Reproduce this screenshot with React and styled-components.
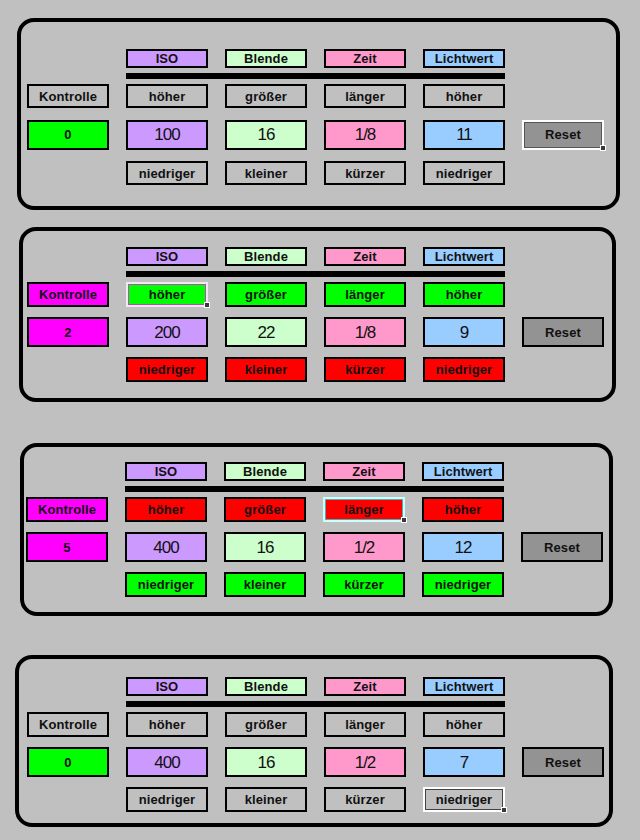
import React from "react";
import styled, { createGlobalStyle } from "styled-components";

const Global = createGlobalStyle`
  html, body { margin: 0; padding: 0; background: #c0c0c0; }
  body { font-family: "Liberation Sans", Arial, sans-serif; color: #111; }
`;

const Page = styled.div`
  width: 640px;
  min-height: 840px;
  padding-top: 18px;
  box-sizing: border-box;
  display: flex;
  flex-direction: column;
  align-items: flex-start;
`;

const Panel = styled.section`
  box-sizing: border-box;
  margin-top: ${(p) => p.$gapTop}px;
  margin-left: ${(p) => p.$left}px;
  width: ${(p) => p.$width}px;
  height: ${(p) => p.$height}px;
  padding-top: ${(p) => p.$padTop}px;
  padding-left: ${(p) => p.$padLeft}px;
  border: 4px solid #000;
  border-radius: 17px;
  display: grid;
  grid-template-columns: repeat(6, 82px);
  grid-template-rows: 19px 6px ${(p) => p.$rowH}px ${(p) => p.$valTrack}px ${(p) => p.$rowH}px;
  column-gap: 17px;
  row-gap: 5px;
  align-content: start;
`;

const Bar = styled.div`
  grid-column: 2 / 6;
  grid-row: 2;
  background: #000;
`;

const Box = styled.div`
  position: relative;
  box-sizing: border-box;
  grid-column: ${(p) => p.$col};
  grid-row: ${(p) => p.$row};
  align-self: ${(p) => (p.$h ? "center" : "stretch")};
  height: ${(p) => (p.$h ? `${p.$h}px` : "auto")};
  background: ${(p) => p.$bg};
  border: 2px solid ${(p) => (p.$sel ? p.$sel.outer : "#000")};
  box-shadow: ${(p) => (p.$sel ? `inset 0 0 0 1px ${p.$sel.inner}` : "none")};
  display: flex;
  align-items: center;
  justify-content: center;
  font-weight: ${(p) => (p.$num ? 400 : 700)};
  font-size: ${(p) => (p.$num ? 17 : 13)}px;
  letter-spacing: ${(p) => (p.$num ? "-1px" : "0.1px")};
  color: #111;
  white-space: nowrap;
  line-height: 1;
`;

const Handle = styled.span`
  position: absolute;
  right: -4px;
  bottom: -3px;
  width: 4px;
  height: 4px;
  background: #3a3a3a;
  border: 1px solid #fff;
`;

const HEAD = [
  { name: "ISO", bg: "#cc99ff" },
  { name: "Blende", bg: "#ccffcc" },
  { name: "Zeit", bg: "#ff99cc" },
  { name: "Lichtwert", bg: "#99ccff" },
];
const UP = ["höher", "größer", "länger", "höher"];
const DOWN = ["niedriger", "kleiner", "kürzer", "niedriger"];

const GRAY = "#c0c0c0";
const GREEN = "#00ff00";
const RED = "#ff0000";
const MAGENTA = "#ff00ff";

const panels = [
  {
    box: { $gapTop: 0, $left: 17, $width: 603, $height: 192, $padTop: 27, $padLeft: 6, $rowH: 24, $valTrack: 43 },
    ctrl: GRAY, count: "0", countBg: GREEN,
    up: GRAY, down: GRAY,
    values: ["100", "16", "1/8", "11"],
    sel: { at: "reset", outer: "#ffffff", inner: "#555555" },
  },
  {
    box: { $gapTop: 17, $left: 19, $width: 597, $height: 175, $padTop: 16, $padLeft: 4, $rowH: 25, $valTrack: 40 },
    ctrl: MAGENTA, count: "2", countBg: MAGENTA,
    up: GREEN, down: RED,
    values: ["200", "22", "1/8", "9"],
    sel: { at: "up-0", outer: "#f4e6f4", inner: "#b050b0" },
  },
  {
    box: { $gapTop: 41, $left: 20, $width: 593, $height: 173, $padTop: 15, $padLeft: 2, $rowH: 25, $valTrack: 40 },
    ctrl: MAGENTA, count: "5", countBg: MAGENTA,
    up: RED, down: GREEN,
    values: ["400", "16", "1/2", "12"],
    sel: { at: "up-2", outer: "#ccffff", inner: "#55aaaa" },
  },
  {
    box: { $gapTop: 39, $left: 15, $width: 598, $height: 172, $padTop: 18, $padLeft: 8, $rowH: 25, $valTrack: 40 },
    ctrl: GRAY, count: "0", countBg: GREEN,
    up: GRAY, down: GRAY,
    values: ["400", "16", "1/2", "7"],
    sel: { at: "down-3", outer: "#ffffff", inner: "#444444" },
  },
];

function Cell({ id, sel, children, ...rest }) {
  const selected = sel.at === id ? sel : null;
  return (
    <Box $sel={selected} {...rest}>
      {children}
      {selected && <Handle />}
    </Box>
  );
}

function ExposurePanel({ data }) {
  return (
    <Panel {...data.box}>
      {HEAD.map((h, i) => (
        <Box key={h.name} $col={i + 2} $row={1} $bg={h.bg}>
          {h.name}
        </Box>
      ))}
      <Bar />
      <Cell id="ctrl" sel={data.sel} $col={1} $row={3} $bg={data.ctrl}>
        Kontrolle
      </Cell>
      {UP.map((t, i) => (
        <Cell key={`u${i}`} id={`up-${i}`} sel={data.sel} $col={i + 2} $row={3} $bg={data.up}>
          {t}
        </Cell>
      ))}
      <Cell id="count" sel={data.sel} $col={1} $row={4} $h={30} $bg={data.countBg}>
        {data.count}
      </Cell>
      {data.values.map((v, i) => (
        <Cell key={`v${i}`} id={`val-${i}`} sel={data.sel} $col={i + 2} $row={4} $h={30} $num $bg={HEAD[i].bg}>
          {v}
        </Cell>
      ))}
      <Cell id="reset" sel={data.sel} $col={6} $row={4} $h={30} $bg="#939393">
        Reset
      </Cell>
      {DOWN.map((t, i) => (
        <Cell key={`d${i}`} id={`down-${i}`} sel={data.sel} $col={i + 2} $row={5} $bg={data.down}>
          {t}
        </Cell>
      ))}
    </Panel>
  );
}

export default function App() {
  return (
    <>
      <Global />
      <Page>
        {panels.map((p, i) => (
          <ExposurePanel key={i} data={p} />
        ))}
      </Page>
    </>
  );
}
